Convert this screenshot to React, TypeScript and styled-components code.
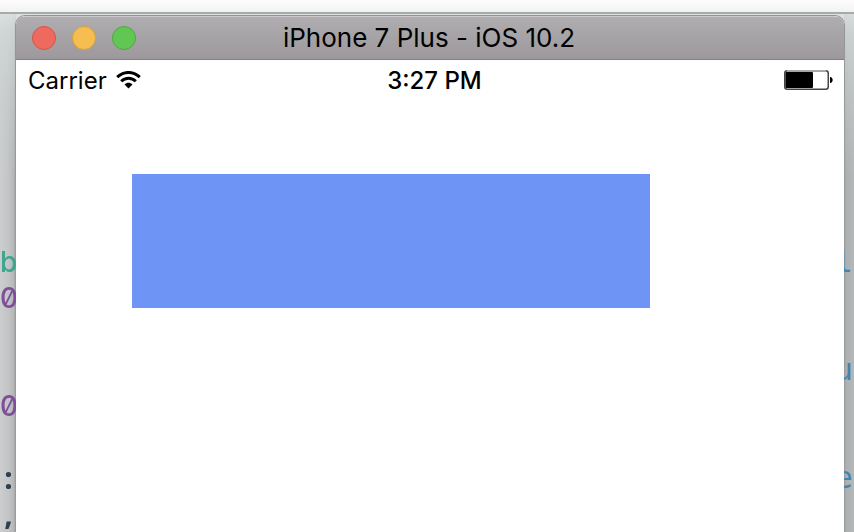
import React from 'react';
import styled, { createGlobalStyle } from 'styled-components';

const GlobalStyle = createGlobalStyle`
  * { box-sizing: border-box; }
  html, body, #root { height: 100%; }
  body { margin: 0; overflow: hidden; background: #d3d9d9; }
`;

const Desktop = styled.div`
  display: flex;
  flex-direction: column;
  height: 100%;
  font-family: Inter, "Liberation Sans", sans-serif;
`;

const EditorEdge = styled.div`
  flex: none;
  height: 14px;
  background: linear-gradient(#fdfdfd, #f2f2f2);
  border-bottom: 2px solid #a9a9a9;
`;

const Workspace = styled.div`
  flex: 1;
  min-height: 0;
  display: grid;
  grid-template-columns: 16px minmax(0, 1fr) 10px;
  background: linear-gradient(#dce4e3, #d3dad9 20px, #c0c4c5 240px, #bcbebf);
`;

const CodeStrip = styled.div<{ $side: 'left' | 'right' }>`
  display: flex;
  flex-direction: column;
  align-items: ${(p) => (p.$side === 'left' ? 'flex-start' : 'flex-end')};
  padding: 14px ${(p) => (p.$side === 'left' ? 0 : 1)}px 0 0;
  overflow: hidden;
  background: ${(p) =>
    p.$side === 'left'
      ? 'linear-gradient(90deg, #cbcdce, #c3c5c6 8px, #b4b6b7 14px, #8f9192)'
      : 'linear-gradient(90deg, #96999a, #adb0b1 2px, #b5b8b9)'};
  mask-image: linear-gradient(rgba(0, 0, 0, 0.15), #000 160px);
`;

type Face = 'plain' | 'mono' | 'mark';

const families: Record<Face, string> = {
  plain: 'Inter, sans-serif',
  mono: '"DejaVu Sans Mono", monospace',
  mark: '"Noto Sans", sans-serif',
};

const CodeLine = styled.span<{ $color: string; $face: Face }>`
  flex: none;
  min-width: 17px;
  height: 36px;
  font-family: ${(p) => families[p.$face]};
  font-size: ${(p) => (p.$face === 'plain' ? 28 : 30)}px;
  font-weight: ${(p) => ({ plain: 500, mono: 400, mark: 700 })[p.$face]};
  font-feature-settings: "zero" 1;
  line-height: 36px;
  text-align: center;
  white-space: pre;
  color: ${(p) => p.$color};
`;

const Simulator = styled.main`
  display: flex;
  flex-direction: column;
  min-width: 0;
  margin-top: 2px;
  border-radius: 9px 9px 0 0;
  background: #fff;
  overflow: hidden;
  box-shadow: 0 0 0 1px #919495;
`;

const TitleBar = styled.header`
  flex: none;
  display: grid;
  grid-template-columns: 1fr auto 1fr;
  align-items: center;
  height: 44px;
  padding: 0 18px 0 16px;
  background: linear-gradient(#b0adb0, #9c989b);
  border-top: 1px solid #cbc9cb;
  border-bottom: 1px solid #838083;
`;

const WindowButtons = styled.div`
  display: flex;
  gap: 16px;
`;

const WindowButton = styled.button<{ $fill: string; $edge: string }>`
  width: 24px;
  height: 24px;
  padding: 0;
  border: 1px solid ${(p) => p.$edge};
  border-radius: 50%;
  background: ${(p) => p.$fill};
`;

const Title = styled.h1`
  margin: 0;
  font-size: 26px;
  line-height: 32px;
  font-weight: 400;
  color: #000;
  white-space: nowrap;
`;

const StatusBar = styled.div`
  flex: none;
  display: grid;
  grid-template-columns: 1fr auto 1fr;
  align-items: center;
  height: 42px;
  padding: 0 11px 0 12px;
  color: #000;
`;

const Carrier = styled.div`
  display: flex;
  align-items: center;
  gap: 9px;
  font-size: 24px;
  line-height: 30px;
`;

const Clock = styled.time`
  padding-left: 8px;
  font-size: 24px;
  font-weight: 500;
  line-height: 30px;
  white-space: nowrap;
`;

const BatterySlot = styled.div`
  display: flex;
  justify-content: flex-end;
`;

const Screen = styled.section`
  padding: 72px 194px 0 116px;
`;

const BlueView = styled.div`
  height: 134px;
  background: #6e94f6;
`;

const WifiIcon = () => (
  <svg width="25" height="20" viewBox="0 0 25 20" role="img" aria-label="Wi-Fi">
    <g fill="none" stroke="#000" strokeWidth="3">
      <path d="M1.2 6.2C7.8-.1 17.2-.1 23.8 6.2" />
      <path d="M5.2 10.3C9.3 6.2 15.7 6.2 19.8 10.3" />
    </g>
    <path d="M8.5 13.4C10.8 11.2 14.2 11.2 16.5 13.4L12.5 17.6Z" fill="#000" />
  </svg>
);

const BatteryIcon = () => (
  <svg width="49" height="22" viewBox="0 0 49 22" role="img" aria-label="Battery">
    <rect x=".75" y=".75" width="43.5" height="18.5" rx="2.5" fill="#fff" stroke="#444" strokeWidth="1.5" />
    <path d="M3 .75H42" stroke="#aaa" strokeWidth="1.5" />
    <rect x="1.5" y="2" width="27.5" height="16" rx="1" fill="#000" />
    <path d="M46 7C49.6 7.4 49.6 12.6 46 13Z" fill="#000" />
  </svg>
);

type Line = { text: string; color: string; face: Face };

const blank: Line = { text: ' ', color: 'transparent', face: 'plain' };
const blanks: Line[] = Array(6).fill(blank);

const leftLines: Line[] = [
  ...blanks,
  { text: 'b', color: '#3fa58d', face: 'plain' },
  { text: '0', color: '#7f4f9a', face: 'plain' },
  blank,
  blank,
  { text: '0', color: '#7f4f9a', face: 'plain' },
  blank,
  { text: ':', color: '#2f3e50', face: 'mark' },
  { text: ',', color: '#2f3e50', face: 'mark' },
];

const rightLines: Line[] = [
  ...blanks,
  { text: 'l', color: '#4285b0', face: 'mono' },
  blank,
  blank,
  { text: 'u', color: '#4285b0', face: 'mono' },
  blank,
  blank,
  { text: 'e', color: '#4285b0', face: 'mono' },
];

const Code = ({ side, lines }: { side: 'left' | 'right'; lines: Line[] }) => (
  <CodeStrip $side={side}>
    {lines.map((line, i) => (
      <CodeLine key={i} $color={line.color} $face={line.face}>
        {line.text}
      </CodeLine>
    ))}
  </CodeStrip>
);

export default function App() {
  return (
    <>
      <GlobalStyle />
      <Desktop>
        <EditorEdge />
        <Workspace>
          <Code side="left" lines={leftLines} />
          <Simulator>
            <TitleBar>
              <WindowButtons>
                <WindowButton $fill="#ee6a5f" $edge="#d65349" aria-label="Close" />
                <WindowButton $fill="#f6be50" $edge="#dca03a" aria-label="Minimize" />
                <WindowButton $fill="#62c655" $edge="#4cab3f" aria-label="Zoom" />
              </WindowButtons>
              <Title>iPhone 7 Plus - iOS 10.2</Title>
            </TitleBar>
            <StatusBar>
              <Carrier>
                Carrier
                <WifiIcon />
              </Carrier>
              <Clock>3:27 PM</Clock>
              <BatterySlot>
                <BatteryIcon />
              </BatterySlot>
            </StatusBar>
            <Screen>
              <BlueView />
            </Screen>
          </Simulator>
          <Code side="right" lines={rightLines} />
        </Workspace>
      </Desktop>
    </>
  );
}
